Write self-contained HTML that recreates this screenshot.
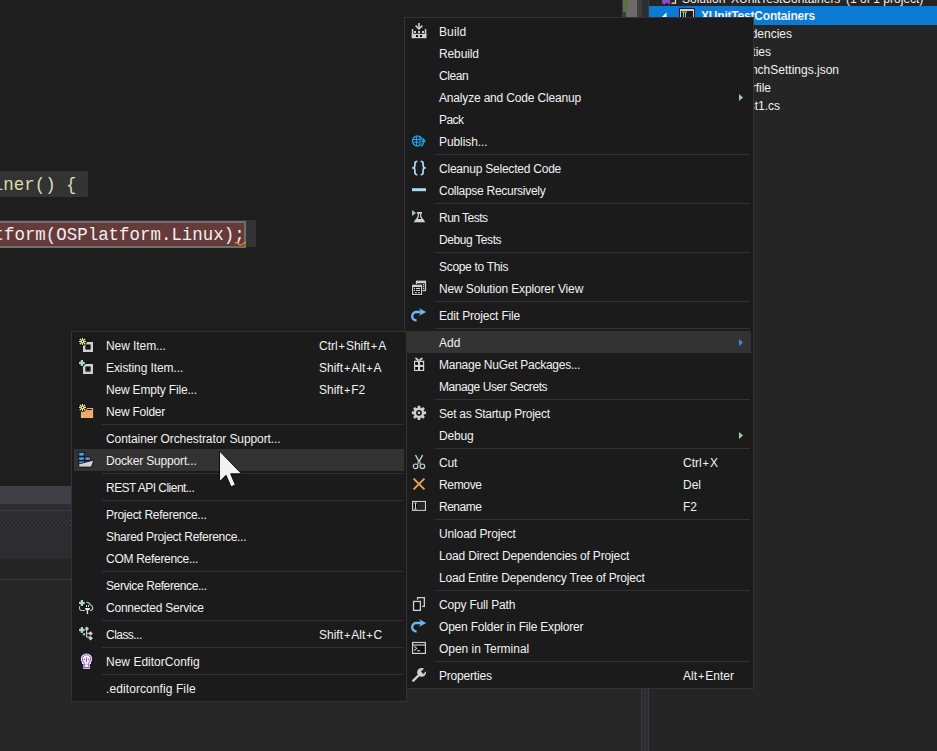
<!DOCTYPE html>
<html><head><meta charset="utf-8">
<style>
*{margin:0;padding:0;box-sizing:border-box}
html,body{width:937px;height:751px;overflow:hidden;background:#1e1e1e;font-family:"Liberation Sans",sans-serif;position:relative}
.abs{position:absolute}
.code{position:absolute;font-family:"Liberation Mono",monospace;font-size:17.45px;line-height:26px;white-space:pre;color:#dcdcdc}
.menu{position:absolute;background:#1b1b1c;border:1px solid #333337}
.tx{position:absolute;height:22px;font-size:12px;line-height:22px;color:#f1f1f1;white-space:pre;letter-spacing:-0.2px}
.k{letter-spacing:0}
.pl{font-size:11px;padding:0 0.9px}
.hlr{position:absolute;height:22px;background:#333334}
.sep{position:absolute;height:1px;background:#333337}
.tree{position:absolute;font-size:12px;line-height:18px;color:#f1f1f1;white-space:pre}
svg{position:absolute;overflow:visible}
</style></head><body>

<!-- editor area -->
<div class="abs" style="left:0;top:0;width:622px;height:486px;background:#1e1e1e"></div>
<!-- code line 1 highlight -->
<div class="abs" style="left:0;top:171px;width:88px;height:26px;background:#333333"></div>
<div class="code" style="left:-7.2px;top:172px;color:#dcdcc0"><span style="color:#dcdcaa">iner</span>() {</div>
<!-- code line 2 -->
<div class="abs" style="left:0;top:220px;width:256px;height:27px;background:#333333"></div>
<div class="abs" style="left:0;top:221px;width:246px;height:27px;background:#673a3a;border:2px solid #6e6e6e;border-left:none"></div>
<div class="code" style="left:-6.5px;top:222px;color:#f0f0f0">tform(OSPlatform.Linux);</div>
<svg style="left:234px;top:241px" width="13" height="6"><path d="M0.8 2.2 Q2.5 1 4 2.5 Q6 4.5 8 3.5 Q10 2.5 11.8 1" stroke="#e08a20" stroke-width="1.3" fill="none"/></svg>

<!-- lower left panel -->
<div class="abs" style="left:0;top:486px;width:641px;height:18px;background:#3f3f46"></div>
<svg style="left:0;top:504px" width="641" height="54"><defs><pattern id="dots" width="4" height="4" patternUnits="userSpaceOnUse"><rect width="4" height="4" fill="#2b2b2f"/><rect x="1" y="1" width="1" height="1" fill="#38383d"/><rect x="3" y="3" width="1" height="1" fill="#38383d"/></pattern>
<pattern id="dots2" width="4" height="4" patternUnits="userSpaceOnUse"><rect width="4" height="4" fill="#2b2b2f"/><rect x="2" y="0" width="1" height="1" fill="#45454a"/><rect x="0" y="2" width="1" height="1" fill="#45454a"/></pattern></defs>
<rect width="641" height="54" fill="url(#dots)"/><rect y="13" width="641" height="8" fill="url(#dots2)"/></svg>
<div class="abs" style="left:0;top:510px;width:641px;height:1px;background:#3a3a3e"></div>
<div class="abs" style="left:0;top:558px;width:641px;height:21px;background:#252526"></div>
<div class="abs" style="left:0;top:579px;width:641px;height:1px;background:#3a3a3e"></div>
<div class="abs" style="left:0;top:580px;width:641px;height:171px;background:#262626"></div>

<!-- scrollbar -->
<div class="abs" style="left:622px;top:0;width:19px;height:486px;background:#3e3e42"></div>
<div class="abs" style="left:626px;top:0;width:11px;height:17px;background:#6f6a6a"></div>
<div class="abs" style="left:623px;top:0;width:5px;height:12px;background:#587248"></div>

<!-- splitter -->
<div class="abs" style="left:641px;top:0;width:8px;height:751px;background:#2d2d32;border-left:1px solid #3a3a3f;border-right:1px solid #3a3a3f"></div>
<svg style="left:641px;top:0" width="8" height="751"><defs><pattern id="sdots" width="8" height="4" patternUnits="userSpaceOnUse"><rect x="4" y="1" width="1" height="1" fill="#3e3e43"/></pattern></defs><rect width="8" height="751" fill="url(#sdots)"/></svg>

<!-- solution explorer -->
<div class="abs" style="left:649px;top:0;width:288px;height:751px;background:#252526"></div>
<div class="abs" style="left:649px;top:6px;width:288px;height:19px;background:#0a7ad4"></div>
<svg style="left:661px;top:0" width="20" height="6"><path d="M1 -4 V3 L3.5 4.5 L5.5 2.5 L9 4.8 V-4 L5.5 -1 L3.5 -3z" fill="#8a4cc4"/><path d="M10.5 3.2 H14.5 V-2" stroke="#e8e8e8" stroke-width="1.2" fill="none"/></svg>
<svg style="left:661px;top:12px" width="6" height="6"><path d="M0.5 5.5 L5.5 0.5 V5.5z" fill="#fff"/></svg>
<svg style="left:679px;top:8px" width="16" height="10"><rect x="0" y="0" width="16" height="10" fill="#1e1e1e"/><rect x="1" y="1" width="14" height="2" fill="#d0d0d0"/><rect x="1" y="1" width="1.2" height="9" fill="#d0d0d0"/><rect x="13.8" y="1" width="1.2" height="9" fill="#d0d0d0"/><rect x="2.2" y="3" width="11.6" height="7" fill="#1b1b1c"/><path d="M3 4 h5 M4.5 4 v5 M6.5 4 v5" stroke="#8fcf9a" stroke-width="1"/></svg>
<div class="tree" style="left:682px;top:-10px">Solution 'XUnitTestContainers' (1 of 1 project)</div>
<div class="tree" style="left:701px;top:7px;font-weight:bold;letter-spacing:-0.2px">XUnitTestContainers</div>
<div class="tree" style="right:145px;top:25px">Dependencies</div>
<div class="tree" style="right:166px;top:43px">Properties</div>
<div class="tree" style="right:98px;top:61px">launchSettings.json</div>
<div class="tree" style="right:166px;top:79px">Dockerfile</div>
<div class="tree" style="right:157px;top:97px">UnitTest1.cs</div>

<!-- MAIN MENU -->
<div class="menu" style="left:404px;top:17px;width:350px;height:672px"></div>
<div class="tx" style="left:439px;top:21px;letter-spacing:0.100px">Build</div>
<svg style="left:411px;top:23px" width="16" height="16" viewBox="0 0 16 16"><rect x="7.2" y="0" width="1.6" height="6" fill="#d0d0d0"/><path d="M4.6 2.6 L8 6 L11.4 2.6" stroke="#d0d0d0" stroke-width="1.5" fill="none"/>
<rect x="0.8" y="6" width="1.5" height="9.2" fill="#d0d0d0"/><rect x="13.8" y="6" width="1.5" height="9.2" fill="#d0d0d0"/><rect x="0.8" y="10.8" width="14.5" height="4.4" fill="#d0d0d0"/>
<rect x="3" y="8" width="2" height="2" fill="#d0d0d0"/><rect x="7" y="8" width="2" height="2" fill="#d0d0d0"/><rect x="11" y="8" width="2" height="2" fill="#d0d0d0"/>
<rect x="5" y="12" width="2" height="2" fill="#000"/><rect x="9" y="12" width="2" height="2" fill="#000"/></svg>
<div class="tx" style="left:439px;top:43px;letter-spacing:-0.114px">Rebuild</div>
<div class="tx" style="left:439px;top:65px;letter-spacing:-0.440px">Clean</div>
<div class="tx" style="left:439px;top:87px;letter-spacing:-0.175px">Analyze and Code Cleanup</div>
<svg style="left:739px;top:94px" width="5" height="8"><path d="M0 0 L4 3.5 L0 7z" fill="#9ccfb0"/></svg>
<div class="tx" style="left:439px;top:109px;letter-spacing:-0.575px">Pack</div>
<div class="tx" style="left:439px;top:131px;letter-spacing:-0.090px">Publish...</div>
<svg style="left:411px;top:133px" width="16" height="16" viewBox="0 0 16 16"><circle cx="6.5" cy="8" r="5" stroke="#1ba1e2" stroke-width="1.4" fill="none"/><path d="M5.5 3.5v9M8.9 3.5v9M2 6.5h9M2 9.2h9" stroke="#1ba1e2" stroke-width="1.1"/>
<path d="M9.3 9.8 L12.5 3.6 L15.7 9.8z" fill="#141414"/><path d="M12.5 7 V9.5 Q12.3 11.8 10.3 13.2" stroke="#141414" stroke-width="3.2" fill="none"/>
<path d="M12.5 7 V9.5 Q12.3 11.8 10.3 13.2" stroke="#1ba1e2" stroke-width="1.7" fill="none"/><path d="M10 9.3 L12.5 4.4 L15 9.3 Q12.5 8 10 9.3z" fill="#1ba1e2"/></svg>
<div class="sep" style="left:435px;top:154px;width:315px"></div>
<div class="tx" style="left:439px;top:158px;letter-spacing:-0.224px">Cleanup Selected Code</div>
<svg style="left:411px;top:160px" width="16" height="16" viewBox="0 0 16 16"><path d="M6.3 1.3 Q3.9 1.3 3.9 3.5 V5.8 Q3.9 7.9 1.3 7.9 Q3.9 7.9 3.9 10 V12.6 Q3.9 14.8 6.3 14.8" stroke="#a8dcf0" stroke-width="1.7" fill="none"/>
<path d="M9.7 1.3 Q12.1 1.3 12.1 3.5 V5.8 Q12.1 7.9 14.7 7.9 Q12.1 7.9 12.1 10 V12.6 Q12.1 14.8 9.7 14.8" stroke="#a8dcf0" stroke-width="1.7" fill="none"/></svg>
<div class="tx" style="left:439px;top:180px;letter-spacing:-0.280px">Collapse Recursively</div>
<svg style="left:411px;top:182px" width="16" height="16" viewBox="0 0 16 16"><rect x="1" y="6.2" width="14" height="3" fill="#a8dcf0"/></svg>
<div class="sep" style="left:435px;top:203px;width:315px"></div>
<div class="tx" style="left:439px;top:207px;letter-spacing:-0.511px">Run Tests</div>
<svg style="left:411px;top:209px" width="16" height="16" viewBox="0 0 16 16"><path d="M1 1 L5 4 L1 7z" fill="#8fcf9a"/><rect x="6" y="3" width="5" height="1.8" fill="#d0d0d0"/>
<path d="M7.3 4.5v3.2 L3.6 13 M9.7 4.5v3.2 L13.4 13" stroke="#d0d0d0" stroke-width="1.2" fill="none"/><path d="M5.2 10h6.6l2.3 3.3h-11.2z" fill="#d0d0d0"/></svg>
<div class="tx" style="left:439px;top:229px;letter-spacing:-0.391px">Debug Tests</div>
<div class="sep" style="left:435px;top:252px;width:315px"></div>
<div class="tx" style="left:439px;top:256px;letter-spacing:-0.308px">Scope to This</div>
<div class="tx" style="left:439px;top:278px;letter-spacing:-0.142px">New Solution Explorer View</div>
<svg style="left:411px;top:280px" width="16" height="16" viewBox="0 0 16 16"><rect x="5.5" y="1.4" width="9" height="9.2" stroke="#d0d0d0" stroke-width="1.2" fill="none"/><rect x="5" y="0.8" width="10" height="2.4" fill="#d0d0d0"/>
<rect x="11.9" y="3.9" width="1.3" height="1.3" fill="#d0d0d0"/><rect x="11.9" y="5.9" width="1.3" height="1.3" fill="#d0d0d0"/><rect x="11.9" y="7.9" width="1.3" height="1.3" fill="#d0d0d0"/>
<rect x="0.4" y="4" width="11.2" height="11.8" fill="#000"/>
<rect x="1.6" y="5.4" width="9" height="9" stroke="#d0d0d0" stroke-width="1.2" fill="#000"/><rect x="1" y="4.8" width="10" height="2.3" fill="#d0d0d0"/>
<rect x="2.9" y="7.9" width="1.3" height="1.3" fill="#d0d0d0"/><rect x="5" y="7.9" width="4.2" height="1.2" fill="#d0d0d0"/>
<rect x="2.9" y="9.9" width="1.3" height="1.3" fill="#d0d0d0"/><rect x="5" y="9.9" width="4.2" height="1.2" fill="#d0d0d0"/>
<rect x="4" y="12" width="1.8" height="1.1" fill="#d0d0d0"/><rect x="7" y="12" width="1.8" height="1.1" fill="#d0d0d0"/></svg>
<div class="sep" style="left:435px;top:301px;width:315px"></div>
<div class="tx" style="left:439px;top:305px;letter-spacing:-0.176px">Edit Project File</div>
<svg style="left:411px;top:307px" width="16" height="16" viewBox="0 0 16 16"><path d="M5.6 13.3 A4.1 4.1 0 0 1 5 5 H11" stroke="#6cb8f6" stroke-width="2.3" fill="none"/><path d="M7.9 1 L15.2 5 L7.9 9 L10.4 5z" fill="#6cb8f6"/></svg>
<div class="sep" style="left:435px;top:328px;width:315px"></div>
<div class="hlr" style="left:407px;top:331px;width:344px"></div>
<div class="tx" style="left:439px;top:332px;letter-spacing:0.067px">Add</div>
<svg style="left:739px;top:339px" width="5" height="8"><path d="M0 0 L4 3.5 L0 7z" fill="#2a90ee"/></svg>
<div class="tx" style="left:439px;top:354px;letter-spacing:-0.263px">Manage NuGet Packages...</div>
<svg style="left:411px;top:356px" width="16" height="16" viewBox="0 0 16 16"><path d="M5 2.2 L7.6 4.6 M11 2.2 L8.4 4.6" stroke="#d0d0d0" stroke-width="1.9"/><circle cx="4.8" cy="2.3" r="0.8" fill="#8fcf9a"/><circle cx="11.2" cy="2.3" r="0.8" fill="#8fcf9a"/>
<rect x="3" y="4.7" width="10.2" height="10.3" fill="#d0d0d0"/><rect x="4.2" y="6.1" width="2.7" height="2.8" fill="#000"/><rect x="9.1" y="6.1" width="2.7" height="2.8" fill="#000"/>
<rect x="4.2" y="11" width="2.7" height="2.8" fill="#000"/><rect x="9.1" y="11" width="2.7" height="2.8" fill="#000"/></svg>
<div class="tx" style="left:439px;top:376px;letter-spacing:-0.416px">Manage User Secrets</div>
<div class="sep" style="left:435px;top:399px;width:315px"></div>
<div class="tx" style="left:439px;top:403px;letter-spacing:-0.273px">Set as Startup Project</div>
<svg style="left:411px;top:405px" width="16" height="16" viewBox="0 0 16 16"><g fill="#d0d0d0"><circle cx="8" cy="7.8" r="5.2"/><path d="M6.8 0.7h2.4l0.4 2.5h-3.2z" transform="rotate(0 8 7.8)"/><path d="M6.8 0.7h2.4l0.4 2.5h-3.2z" transform="rotate(45 8 7.8)"/><path d="M6.8 0.7h2.4l0.4 2.5h-3.2z" transform="rotate(90 8 7.8)"/><path d="M6.8 0.7h2.4l0.4 2.5h-3.2z" transform="rotate(135 8 7.8)"/><path d="M6.8 0.7h2.4l0.4 2.5h-3.2z" transform="rotate(180 8 7.8)"/><path d="M6.8 0.7h2.4l0.4 2.5h-3.2z" transform="rotate(225 8 7.8)"/><path d="M6.8 0.7h2.4l0.4 2.5h-3.2z" transform="rotate(270 8 7.8)"/><path d="M6.8 0.7h2.4l0.4 2.5h-3.2z" transform="rotate(315 8 7.8)"/></g>
<circle cx="8" cy="7.8" r="2.9" fill="#111"/><circle cx="8" cy="7.8" r="1.4" fill="#d0d0d0"/></svg>
<div class="tx" style="left:439px;top:425px;letter-spacing:-0.180px">Debug</div>
<svg style="left:739px;top:432px" width="5" height="8"><path d="M0 0 L4 3.5 L0 7z" fill="#9ccfb0"/></svg>
<div class="sep" style="left:435px;top:448px;width:315px"></div>
<div class="tx" style="left:439px;top:452px;letter-spacing:-0.200px">Cut</div>
<div class="tx k" style="left:683px;top:452px">Ctrl<span class="pl">+</span>X</div>
<svg style="left:411px;top:454px" width="16" height="16" viewBox="0 0 16 16"><path d="M4.5 1 L8.3 8.2 M11.6 1 L7.8 8.2" stroke="#b8dcc4" stroke-width="1.4"/><path d="M7 7.8 V10.5 M9.1 7.8 V10.5" stroke="#d0d0d0" stroke-width="1.1"/>
<circle cx="4.6" cy="12.3" r="2.3" stroke="#d0d0d0" stroke-width="1.2" fill="none"/><circle cx="11.4" cy="12.3" r="2.3" stroke="#d0d0d0" stroke-width="1.2" fill="none"/></svg>
<div class="tx" style="left:439px;top:474px;letter-spacing:-0.333px">Remove</div>
<div class="tx k" style="left:683px;top:474px">Del</div>
<svg style="left:411px;top:476px" width="16" height="16" viewBox="0 0 16 16"><path d="M2.6 2.6 L13.4 13.4 M13.4 2.6 L2.6 13.4" stroke="#e8a050" stroke-width="2"/></svg>
<div class="tx" style="left:439px;top:496px;letter-spacing:-0.500px">Rename</div>
<div class="tx k" style="left:683px;top:496px">F2</div>
<svg style="left:411px;top:498px" width="16" height="16" viewBox="0 0 16 16"><rect x="1.6" y="3.5" width="12.8" height="8.8" stroke="#d0d0d0" stroke-width="1.2" fill="#0c0c0c"/><rect x="6.5" y="4.5" width="7" height="7" fill="#262626"/>
<path d="M3.3 5h2.4M3.3 11h2.4M4.5 5v6" stroke="#d0d0d0" stroke-width="1"/></svg>
<div class="sep" style="left:435px;top:519px;width:315px"></div>
<div class="tx" style="left:439px;top:523px;letter-spacing:-0.136px">Unload Project</div>
<div class="tx" style="left:439px;top:545px;letter-spacing:-0.151px">Load Direct Dependencies of Project</div>
<div class="tx" style="left:439px;top:567px;letter-spacing:-0.208px">Load Entire Dependency Tree of Project</div>
<div class="sep" style="left:435px;top:590px;width:315px"></div>
<div class="tx" style="left:439px;top:594px;letter-spacing:-0.179px">Copy Full Path</div>
<svg style="left:411px;top:596px" width="16" height="16" viewBox="0 0 16 16"><path d="M6.55 3.7 V1.55 H13.35 V10.35 H11" stroke="#d0d0d0" stroke-width="1.3" fill="none"/><rect x="2.55" y="5.45" width="6.8" height="8.9" stroke="#d0d0d0" stroke-width="1.3" fill="#111"/></svg>
<div class="tx" style="left:439px;top:616px;letter-spacing:-0.204px">Open Folder in File Explorer</div>
<svg style="left:411px;top:618px" width="16" height="16" viewBox="0 0 16 16"><path d="M5.6 13.3 A4.1 4.1 0 0 1 5 5 H11" stroke="#6cb8f6" stroke-width="2.3" fill="none"/><path d="M7.9 1 L15.2 5 L7.9 9 L10.4 5z" fill="#6cb8f6"/></svg>
<div class="tx" style="left:439px;top:638px;letter-spacing:-0.019px">Open in Terminal</div>
<svg style="left:411px;top:640px" width="16" height="16" viewBox="0 0 16 16"><rect x="1.6" y="2.5" width="12.8" height="10.9" stroke="#d0d0d0" stroke-width="1.2" fill="#0c0c0c"/><rect x="1" y="4.4" width="14" height="1.2" fill="#d0d0d0"/>
<path d="M3.3 6.3 L5.7 8.3 L3.3 10.5" stroke="#b0d8b0" stroke-width="1.1" fill="none"/><rect x="6" y="10.2" width="3.2" height="1.1" fill="#d0d0d0"/></svg>
<div class="sep" style="left:435px;top:661px;width:315px"></div>
<div class="tx" style="left:439px;top:665px;letter-spacing:-0.200px">Properties</div>
<div class="tx k" style="left:683px;top:665px">Alt<span class="pl">+</span>Enter</div>
<svg style="left:411px;top:667px" width="16" height="16" viewBox="0 0 16 16"><path d="M2.3 13.7 L8.5 7.5" stroke="#d0d0d0" stroke-width="2.4" stroke-linecap="round"/><circle cx="10.6" cy="5.3" r="4.4" fill="#d0d0d0"/><path d="M10 4.6 L13.6 1 L15.9 3.3 L12.3 6.9z" fill="#1b1b1c"/></svg>

<!-- SUB MENU -->
<div class="menu" style="left:71px;top:331px;width:336px;height:371px"></div>
<div class="tx" style="left:106px;top:335px;letter-spacing:-0.073px">New Item...</div>
<div class="tx k" style="left:319px;top:335px">Ctrl<span class="pl">+</span>Shift<span class="pl">+</span>A</div>
<svg style="left:78px;top:337px" width="16" height="16" viewBox="0 0 16 16"><rect x="6.2" y="6.2" width="7.6" height="7.6" stroke="#d0d0d0" stroke-width="2.4" fill="#161616"/><circle cx="4.5" cy="4.4" r="4.3" fill="#000"/><path d="M0.8999999999999999 4.4h7.2M4.5 0.8000000000000003v7.2" stroke="#f0eaa0" stroke-width="1.2"/><g fill="#f0eaa0"><circle cx="2.4" cy="2.3000000000000003" r="0.9"/><circle cx="6.6" cy="2.3000000000000003" r="0.9"/><circle cx="2.4" cy="6.5" r="0.9"/><circle cx="6.6" cy="6.5" r="0.9"/></g><circle cx="4.5" cy="4.4" r="1.3" fill="#000" stroke="#f0eaa0" stroke-width="1.1"/></svg>
<div class="tx" style="left:106px;top:357px;letter-spacing:-0.094px">Existing Item...</div>
<div class="tx k" style="left:319px;top:357px">Shift<span class="pl">+</span>Alt<span class="pl">+</span>A</div>
<svg style="left:78px;top:359px" width="16" height="16" viewBox="0 0 16 16"><rect x="6.2" y="6.2" width="7.6" height="7.6" stroke="#d0d0d0" stroke-width="2.4" fill="#161616"/><path d="M0.6000000000000001 4h6.6M3.9 0.7000000000000002v6.6" stroke="#000" stroke-width="4.2"/><path d="M1.0 4h5.8M3.9 1.1v5.8" stroke="#a8d8b8" stroke-width="2.4"/></svg>
<div class="tx" style="left:106px;top:379px;letter-spacing:-0.188px">New Empty File...</div>
<div class="tx k" style="left:319px;top:379px">Shift<span class="pl">+</span>F2</div>
<div class="tx" style="left:106px;top:401px;letter-spacing:-0.230px">New Folder</div>
<svg style="left:78px;top:403px" width="16" height="16" viewBox="0 0 16 16"><path d="M2.9 7 H7 L8.5 4.9 H15.1 V15 H2.9z" fill="#f0b070"/><rect x="9.2" y="6" width="4.5" height="1.1" fill="#000"/>
<g fill="#d08850"><circle cx="7.5" cy="9.5" r="0.5"/><circle cx="9.5" cy="9.5" r="0.5"/><circle cx="11.5" cy="9.5" r="0.5"/><circle cx="5.5" cy="11.5" r="0.5"/><circle cx="8.5" cy="11.5" r="0.5"/><circle cx="12.5" cy="11.5" r="0.5"/><circle cx="7" cy="13.5" r="0.5"/><circle cx="10" cy="13.5" r="0.5"/></g><circle cx="4.5" cy="4.4" r="4.3" fill="#000"/><path d="M0.8999999999999999 4.4h7.2M4.5 0.8000000000000003v7.2" stroke="#f0eaa0" stroke-width="1.2"/><g fill="#f0eaa0"><circle cx="2.4" cy="2.3000000000000003" r="0.9"/><circle cx="6.6" cy="2.3000000000000003" r="0.9"/><circle cx="2.4" cy="6.5" r="0.9"/><circle cx="6.6" cy="6.5" r="0.9"/></g><circle cx="4.5" cy="4.4" r="1.3" fill="#000" stroke="#f0eaa0" stroke-width="1.1"/></svg>
<div class="sep" style="left:102px;top:424px;width:301px"></div>
<div class="tx" style="left:106px;top:428px;letter-spacing:-0.085px">Container Orchestrator Support...</div>
<div class="hlr" style="left:74px;top:449px;width:330px"></div>
<div class="tx" style="left:106px;top:450px;letter-spacing:-0.165px">Docker Support...</div>
<svg style="left:78px;top:452px" width="16" height="16" viewBox="0 0 16 16"><g fill="#4aa0ea" stroke="#000" stroke-width="0.7"><rect x="0.8" y="0.4" width="5.4" height="3.6"/><rect x="0.8" y="5" width="5.4" height="3.2"/><rect x="7" y="5" width="5.2" height="3.2"/><rect x="0.8" y="9" width="5.4" height="3"/></g>
<path d="M0.8 12 L15.8 8 L13.3 15 H0.8z" fill="#d4d4d4" stroke="#000" stroke-width="0.7"/></svg>
<div class="sep" style="left:102px;top:473px;width:301px"></div>
<div class="tx" style="left:106px;top:477px;letter-spacing:-0.533px">REST API Client...</div>
<div class="sep" style="left:102px;top:500px;width:301px"></div>
<div class="tx" style="left:106px;top:504px;letter-spacing:-0.275px">Project Reference...</div>
<div class="tx" style="left:106px;top:526px;letter-spacing:-0.293px">Shared Project Reference...</div>
<div class="tx" style="left:106px;top:548px;letter-spacing:-0.287px">COM Reference...</div>
<div class="sep" style="left:102px;top:571px;width:301px"></div>
<div class="tx" style="left:106px;top:575px;letter-spacing:-0.400px">Service Reference...</div>
<div class="tx" style="left:106px;top:597px;letter-spacing:-0.218px">Connected Service</div>
<svg style="left:78px;top:599px" width="16" height="16" viewBox="0 0 16 16"><path d="M1.6 7.2 Q1.2 11.5 3.2 11.5 H6.8 M12 11.5 H13 Q15 11 14.7 8.3 Q14.3 6.3 12.5 6 Q11.3 3.3 8.5 3.2" stroke="#b8d4c0" stroke-width="1.1" fill="none"/>
<rect x="8" y="6" width="0.9" height="2" fill="#e8e8e8"/><rect x="10.1" y="6" width="0.9" height="2" fill="#e8e8e8"/><path d="M6.9 9 H12.2 L11.2 11.3 H7.9z" fill="#e8e8e8"/><rect x="8.8" y="11.2" width="1.3" height="3.8" fill="#e8e8e8"/><path d="M0.6000000000000001 4h6.6M3.9 0.7000000000000002v6.6" stroke="#000" stroke-width="4.2"/><path d="M1.0 4h5.8M3.9 1.1v5.8" stroke="#a8d8b8" stroke-width="2.4"/></svg>
<div class="sep" style="left:102px;top:620px;width:301px"></div>
<div class="tx" style="left:106px;top:624px;letter-spacing:-0.537px">Class...</div>
<div class="tx k" style="left:319px;top:624px">Shift<span class="pl">+</span>Alt<span class="pl">+</span>C</div>
<svg style="left:78px;top:626px" width="16" height="16" viewBox="0 0 16 16"><path d="M8.6 3 V11 H12 M8.6 7.3 H12" stroke="#d0d0d0" stroke-width="1.1" fill="none"/>
<g fill="#d0d0d0"><path d="M8.7 0.5 L11 2.8 L8.7 5.1 L6.4 2.8z"/><path d="M12.6 5.2 L14.9 7.5 L12.6 9.8 L10.3 7.5z"/><path d="M12.6 10 L14.9 12.3 L12.6 14.6 L10.3 12.3z"/><path d="M6 6.8 L7.5 8.3 L6 9.8 L4.5 8.3z"/></g><path d="M0.6000000000000001 4h6.6M3.9 0.7000000000000002v6.6" stroke="#000" stroke-width="4.2"/><path d="M1.0 4h5.8M3.9 1.1v5.8" stroke="#a8d8b8" stroke-width="2.4"/></svg>
<div class="sep" style="left:102px;top:647px;width:301px"></div>
<div class="tx" style="left:106px;top:651px;letter-spacing:0.013px">New EditorConfig</div>
<svg style="left:78px;top:653px" width="16" height="16" viewBox="0 0 16 16"><circle cx="8.5" cy="6" r="5.6" fill="#f6f6f6"/><path d="M5.3 9.5 H11.9 V15.8 H5.3z" fill="#f6f6f6"/>
<circle cx="8.5" cy="6" r="4.2" stroke="#8e3fc0" stroke-width="0.9" fill="none"/><rect x="6.2" y="10.9" width="4.6" height="3.6" stroke="#8e3fc0" stroke-width="0.9" fill="#f6f6f6"/>
<path d="M8.5 4.3v6.6" stroke="#8e3fc0" stroke-width="0.9"/><circle cx="6.4" cy="6.5" r="0.7" fill="#8e3fc0"/><circle cx="10.6" cy="6.5" r="0.7" fill="#8e3fc0"/>
<rect x="4" y="9" width="9" height="1.9" fill="#f6f6f6"/><path d="M5.6 8.6 L6.4 10.9 M11.4 8.6 L10.6 10.9" stroke="#8e3fc0" stroke-width="0.9"/></svg>
<div class="sep" style="left:102px;top:674px;width:301px"></div>
<div class="tx" style="left:106px;top:678px;letter-spacing:0.089px">.editorconfig File</div>
<!-- cursor -->
<svg style="left:219px;top:451px" width="28" height="40" viewBox="0 0 28 40"><path d="M0.5 0 L0.5 30.8 L7 24.3 L12 35.8 L16.4 33.9 L11.6 22.8 L22.6 22.8 Z" fill="#f2f2f2" stroke="#000" stroke-width="0.9" stroke-linejoin="miter"/></svg>

</body></html>
